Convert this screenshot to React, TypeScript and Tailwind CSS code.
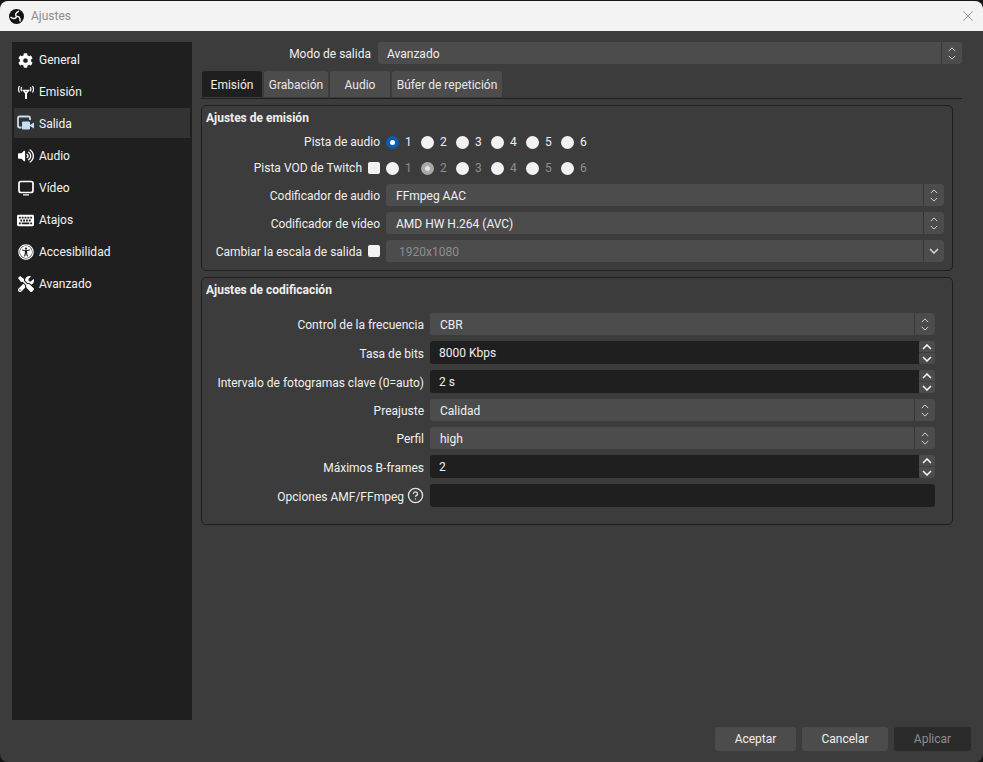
import React from 'react';
import { CircleHelp, X } from 'lucide-react';
import { FaCog, FaVolumeUp, FaKeyboard, FaUniversalAccess, FaTools } from 'react-icons/fa';

const arm = 'M8 8C6.400 6.600 6.800 3.400 10.800 2.200';

const ObsLogo = () => (
  <svg width="15" height="15" viewBox="0 0 16 16" fill="none" stroke="#fff" strokeWidth="1.500">
    <circle cx="8" cy="8" r="8" fill="#111" stroke="none" />
    <path d={arm} />
    <path d={arm} transform="rotate(120 8 8)" />
    <path d={arm} transform="rotate(240 8 8)" />
  </svg>
);

const AntennaIcon = () => (
  <svg width="16" height="16" viewBox="0 0 16 16" fill="none" stroke="#fff">
    <path d="M5.500 6.500h5L8 9.500z" strokeWidth="1.500" />
    <path d="M8 8v7" strokeWidth="2" />
    <path d="M3.700 3C2.900 4.400 2.900 6 3.700 7.400M12.300 3c.8 1.400.8 3 0 4.400M1.500 2C.3 4 .3 6.500 1.500 8.500M14.500 2c1.200 2 1.200 4.500 0 6.500" strokeWidth="1.200" />
  </svg>
);

const OutputIcon = () => (
  <svg width="17" height="16" viewBox="0 0 17 16" fill="none">
    <path d="M4.500 12.500H2.500A1.500 1.500 0 0 1 1 11V3A1.500 1.500 0 0 1 2.500 1.500h9A1.500 1.500 0 0 1 13 3v2" stroke="#c6ddf1" strokeWidth="1.800" />
    <rect x="5" y="6.500" width="8" height="8" rx="1.200" fill="#c6ddf1" />
    <path d="M13 10l4-2.500v6L13 11z" fill="#c6ddf1" />
  </svg>
);

const MonitorIcon = () => (
  <svg width="16" height="16" viewBox="0 0 16 16" fill="none" stroke="#fff">
    <rect x="1" y="1.500" width="14" height="11" rx="2" strokeWidth="1.700" />
    <path d="M5 14.800h6" strokeWidth="1.200" />
  </svg>
);

const Chevron = ({ up, size = 9, color = '#d8d8d8', width = 1.2 }: { up?: boolean; size?: number; color?: string; width?: number }) => (
  <svg width={size} height={Math.round(size * 0.6)} viewBox="0 0 10 6" fill="none" stroke={color} strokeWidth={width}>
    <path d={up ? 'M1 5l4-4 4 4' : 'M1 1l4 4 4-4'} />
  </svg>
);

const Combo = ({ value, disabled, single, tight }: { value: string; disabled?: boolean; single?: boolean; tight?: boolean }) => (
  <div className="flex h-[22px] flex-1 items-stretch overflow-hidden rounded-[3px] bg-[#4c4c4c]">
    <div className={`flex-1 pt-px leading-[22px] ${disabled ? 'pl-[13px] text-[#8e8e8e]' : tight ? 'pl-[9px] text-[#f0f0f0]' : 'pl-[10px] text-[#f0f0f0]'}`}>{value}</div>
    <div className="flex w-[21px] flex-col items-center justify-center gap-[3px] border-l border-[#363636]">
      {single ? (
        <Chevron size={10} width={1.5} />
      ) : (
        <>
          <Chevron up size={8} />
          <Chevron size={8} />
        </>
      )}
    </div>
  </div>
);

const Spin = ({ value }: { value: string }) => (
  <div className="flex h-[23px] flex-1 items-stretch">
    <div className="flex-1 rounded-l-[3px] bg-[#1f1f1f] pl-[9px] pt-px leading-[22px] text-[#f0f0f0]">{value}</div>
    <div className="flex w-[16px] flex-col gap-px">
      <div className="flex flex-1 items-center justify-center rounded-t-[3px] bg-[#4c4c4c]">
        <Chevron up size={10} color="#fff" width={1.500} />
      </div>
      <div className="flex flex-1 items-center justify-center rounded-b-[3px] bg-[#4c4c4c]">
        <Chevron size={10} color="#fff" width={1.500} />
      </div>
    </div>
  </div>
);

const Check = () => <div className="h-[12px] w-[12px] shrink-0 rounded-[2px] bg-[#f2f2f2]" />;

const Radio = ({ label, state, dim }: { label: string; state?: 'on' | 'off-on'; dim?: boolean }) => (
  <div className="flex w-[35px] shrink-0 items-center gap-[6px]">
    {state === 'on' ? (
      <div className="flex h-[13px] w-[13px] items-center justify-center rounded-full bg-[#0d5cb0]">
        <div className="h-[5px] w-[5px] rounded-full bg-white" />
      </div>
    ) : state === 'off-on' ? (
      <div className="flex h-[13px] w-[13px] items-center justify-center rounded-full bg-[#a8a8a8]">
        <div className="h-[5px] w-[5px] rounded-full bg-[#e0e0e0]" />
      </div>
    ) : (
      <div className="h-[13px] w-[13px] rounded-full bg-[#f2f2f2]" />
    )}
    <span className={dim ? 'text-[#8e8e8e]' : 'text-[#f0f0f0]'}>{label}</span>
  </div>
);

const navItems = [
  { label: 'General', icon: <FaCog size={15} color="#fff" /> },
  { label: 'Emisión', icon: <AntennaIcon /> },
  { label: 'Salida', icon: <OutputIcon />, active: true },
  { label: 'Audio', icon: <FaVolumeUp size={16} color="#fff" /> },
  { label: 'Vídeo', icon: <MonitorIcon /> },
  { label: 'Atajos', icon: <FaKeyboard size={17} color="#fff" /> },
  { label: 'Accesibilidad', icon: <FaUniversalAccess size={16} color="#fff" /> },
  { label: 'Avanzado', icon: <FaTools size={16} color="#fff" /> },
];

const tabs = [
  { label: 'Emisión', width: 'w-[60px]', active: true },
  { label: 'Grabación', width: 'w-[64px]' },
  { label: 'Audio', width: 'w-[60px]' },
  { label: 'Búfer de repetición', width: 'w-[110px]' },
];

const Row1 = ({ label, children, check, shift }: { label: string; children: React.ReactNode; check?: boolean; shift?: boolean }) => (
  <div className="flex items-center">
    <div className="flex w-[174px] shrink-0 items-center justify-end gap-[6px] whitespace-nowrap text-right">
      <span className={shift ? 'pt-[2px]' : ''}>{label}</span>
      {check && <Check />}
    </div>
    <div className="ml-[6px] flex flex-1 items-center">{children}</div>
  </div>
);

const Row2 = ({ label, children, help }: { label: string; children: React.ReactNode; help?: boolean }) => (
  <div className="flex items-center">
    <div className="flex w-[218px] shrink-0 items-center justify-end gap-[3px] whitespace-nowrap text-right">
      <span className="pt-[2px]">{label}</span>
      {help && <CircleHelp size={17} color="#e0e0e0" strokeWidth={1.900} />}
    </div>
    <div className="ml-[6px] flex flex-1 items-center">{children}</div>
  </div>
);

export default function App() {
  return (
    <div
      className="h-[762px] w-[983px] overflow-hidden bg-[#161616] pt-px text-[12px] text-[#f0f0f0]"
      style={{ fontFamily: 'Roboto, "Noto Sans", sans-serif' }}
    >
      <div className="flex h-[761px] flex-col overflow-hidden rounded-[8px] bg-[#3c3c3c]">
        {/* title bar */}
        <div className="flex h-[30px] shrink-0 items-center bg-[#f3f3f3] pl-[9px] pr-[6px]">
          <ObsLogo />
          <span className="ml-[7px] flex-1 text-[#8c8c8c]">Ajustes</span>
          <X size={18} color="#8a8a8a" strokeWidth={1.100} />
        </div>

        <div className="flex flex-1 gap-[9px] pl-[12px] pr-[21px] pt-[11px]">
          {/* sidebar */}
          <div className="flex h-[678px] w-[180px] shrink-0 flex-col bg-[#1f1f1f] px-[2px] pt-[2px]">
            {navItems.map((item) => (
              <div
                key={item.label}
                className={`flex shrink-0 items-center gap-[3px] pl-[3px] ${item.active ? 'mb-[2px] h-[30px] bg-[#333333]' : 'h-[32px]'}`}
              >
                <div className="flex w-[17px] justify-center">{item.icon}</div>
                <span className={`ml-[2px] text-[#f4f4f4] ${item.active ? 'pt-[2px]' : ''}`}>{item.label}</span>
              </div>
            ))}
          </div>

          {/* main panel */}
          <div className="flex flex-1 flex-col">
            <div className="flex items-center">
              <div className="w-[170px] shrink-0 pt-[2px] text-right">Modo de salida</div>
              <div className="ml-[7px] flex flex-1">
                <Combo value="Avanzado" tight />
              </div>
            </div>

            {/* tabs */}
            <div className="mt-[7px] flex h-[28px] gap-[2px] border-b border-[#1f1f1f] pl-px">
              {tabs.map((tab) => (
                <div
                  key={tab.label}
                  className={`flex h-[26px] ${tab.width} items-center justify-center whitespace-nowrap rounded-t-[3px] pt-[2px] ${tab.active ? 'bg-[#1f1f1f]' : 'bg-[#4c4c4c] text-[#e8e8e8]'}`}
                >
                  {tab.label}
                </div>
              ))}
            </div>

            <div className="mr-[9px] mt-[6px] flex flex-col gap-[6px]">
              {/* stream group */}
              <div className="h-[166px] rounded-[5px] border border-[#1f1f1f] pl-[4px] pr-[8px] pt-[3px]">
                <div className="font-bold leading-[18px]">Ajustes de emisión</div>
                <div className="mt-[6px] flex flex-col">
                  <div className="h-[26px]">
                    <Row1 label="Pista de audio">
                      <Radio label="1" state="on" />
                      <Radio label="2" />
                      <Radio label="3" />
                      <Radio label="4" />
                      <Radio label="5" />
                      <Radio label="6" />
                    </Row1>
                  </div>
                  <div className="h-[25px]">
                    <Row1 label="Pista VOD de Twitch" check>
                      <Radio label="1" dim />
                      <Radio label="2" state="off-on" dim />
                      <Radio label="3" dim />
                      <Radio label="4" dim />
                      <Radio label="5" dim />
                      <Radio label="6" dim />
                    </Row1>
                  </div>
                  <div className="flex flex-col gap-[6px]">
                    <Row1 label="Codificador de audio" shift><Combo value="FFmpeg AAC" /></Row1>
                    <Row1 label="Codificador de vídeo" shift><Combo value="AMD HW H.264 (AVC)" /></Row1>
                    <Row1 label="Cambiar la escala de salida" check shift><Combo value="1920x1080" disabled single /></Row1>
                  </div>
                </div>
              </div>

              {/* encoder group */}
              <div className="h-[248px] rounded-[5px] border border-[#1f1f1f] pl-[4px] pr-[17px] pt-[3px]">
                <div className="font-bold leading-[18px]">Ajustes de codificación</div>
                <div className="mt-[14px] flex flex-col gap-[6px]">
                  <Row2 label="Control de la frecuencia"><Combo value="CBR" /></Row2>
                  <Row2 label="Tasa de bits"><Spin value="8000 Kbps" /></Row2>
                  <Row2 label="Intervalo de fotogramas clave (0=auto)"><Spin value="2 s" /></Row2>
                  <Row2 label="Preajuste"><Combo value="Calidad" /></Row2>
                  <Row2 label="Perfil"><Combo value="high" /></Row2>
                  <Row2 label="Máximos B-frames"><Spin value="2" /></Row2>
                  <Row2 label="Opciones AMF/FFmpeg" help>
                    <div className="h-[23px] flex-1 rounded-[3px] bg-[#1f1f1f]" />
                  </Row2>
                </div>
              </div>
            </div>
          </div>
        </div>

        {/* footer buttons */}
        <div className="flex justify-end gap-[6px] pb-[11px] pr-[12px]">
          <div className="flex h-[24px] w-[81px] items-center justify-center rounded-[3px] bg-[#4c4c4c]">Aceptar</div>
          <div className="flex h-[24px] w-[86px] items-center justify-center rounded-[3px] bg-[#4c4c4c]">Cancelar</div>
          <div className="flex h-[24px] w-[77px] items-center justify-center rounded-[3px] bg-[#2b2b2b] text-[#8e8e8e]">Aplicar</div>
        </div>
      </div>
    </div>
  );
}
